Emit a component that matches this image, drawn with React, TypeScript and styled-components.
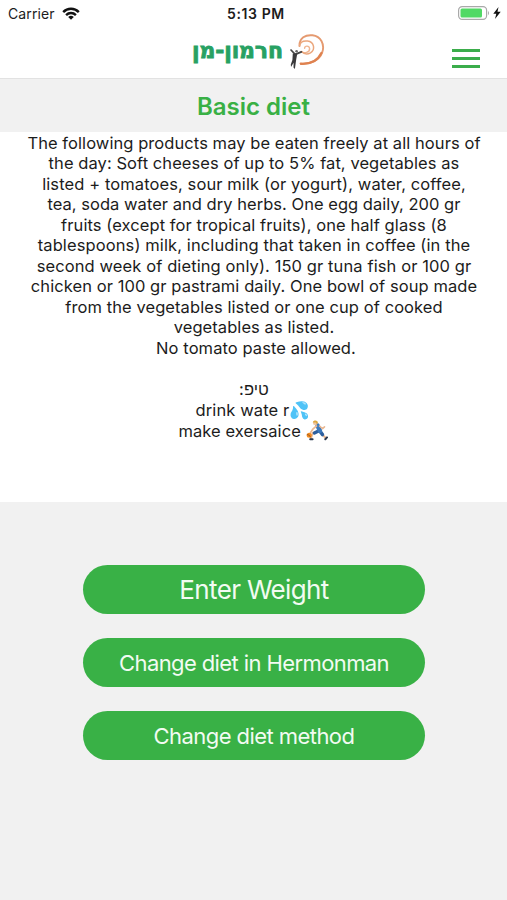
import React from "react";
import styled, { createGlobalStyle } from "styled-components";

const GlobalStyle = createGlobalStyle`
  * { box-sizing: border-box; }
  body { margin: 0; background: #f1f1f1; font-family: Inter, "Liberation Sans", sans-serif; }
`;

const Screen = styled.main`
  display: flex;
  flex-direction: column;
  width: 507px;
  height: 900px;
  overflow: hidden;
  background: #f1f1f1;
`;

const StatusBar = styled.div`
  display: grid;
  grid-template-columns: 1fr auto 1fr;
  align-items: center;
  height: 27px;
  padding: 0 6px 0 8px;
  background: #fff;
  color: #1c1c1c;
`;

const Carrier = styled.div`
  display: flex;
  align-items: center;
  gap: 7px;
  font-size: 14px;
  letter-spacing: 0.1px;
`;

const Clock = styled.div`
  padding-left: 3px;
  font-size: 14px;
  font-weight: 600;
  letter-spacing: 0.6px;
`;

const Power = styled.div`
  display: flex;
  justify-content: flex-end;
  align-items: center;
  gap: 3px;
  padding-bottom: 1px;
`;

const Header = styled.header`
  display: grid;
  grid-template-columns: 1fr auto 1fr;
  height: 52px;
  padding: 0 27px 0 37px;
  background: #fff;
  border-bottom: 1px solid #e2e2e2;
`;

const Logo = styled.div`
  grid-column: 2;
  display: flex;
  align-items: flex-start;
  gap: 6px;
  padding-top: 6px;
`;

const LogoName = styled.span`
  padding-top: 6px;
  color: #27a163;
  font: 700 22px/24px "DejaVu Sans", sans-serif;
  letter-spacing: -0.15px;
  -webkit-text-stroke: 0.8px #27a163;
`;

const MenuButton = styled.button`
  justify-self: end;
  display: flex;
  flex-direction: column;
  gap: 5px;
  width: 28px;
  height: 19px;
  margin-top: 22px;
  padding: 0;
  border: 0;
  background: none;
`;

const MenuLine = styled.span`
  width: 28px;
  height: 3px;
  background: #3bad4b;
`;

const TitleBar = styled.div`
  display: flex;
  align-items: center;
  justify-content: center;
  height: 53px;
  background: #f1f1f1;
`;

const Title = styled.h1`
  margin: 2px 0 0;
  color: #39b045;
  font-size: 24px;
  line-height: 30px;
  font-weight: 600;
`;

const Details = styled.section`
  height: 370px;
  padding: 1px 0 0 1px;
  background: #fff;
  color: #1c1c1c;
`;

const Line = styled.div<{ $track?: number; $indent?: number }>`
  display: flex;
  justify-content: center;
  align-items: center;
  height: 20.47px;
  padding-left: ${(p) => p.$indent ?? 0}px;
  font-size: 16.5px;
  line-height: 20.47px;
  white-space: pre;
  letter-spacing: ${(p) => p.$track ?? 0.07}px;
`;

const Tips = styled.div`
  padding: 1px 2px 0 0;
`;

const Actions = styled.nav`
  display: flex;
  flex-direction: column;
  align-items: center;
  gap: 24px;
  padding: 63px 0 0 1px;
`;

const Action = styled.button<{ $size: number; $track: number }>`
  width: 342px;
  height: 49px;
  padding: 0;
  border: 0;
  border-radius: 25px;
  background: #39b146;
  color: #f2fbf2;
  font-family: inherit;
  font-size: ${(p) => p.$size}px;
  letter-spacing: ${(p) => p.$track}px;
`;

const WifiIcon = () => (
  <svg width="18" height="13" viewBox="0 0 18 13" fill="none" stroke="#111" strokeWidth="2.4">
    <path d="M1.2 5.1C5.5.6 12.5.6 16.8 5.1" />
    <path d="M4.1 8.1C6.9 5.3 11.1 5.3 13.9 8.1" />
    <path d="M6.2 9.9Q9 7.7 11.8 9.9L9 12.8Z" fill="#111" stroke="none" />
  </svg>
);

const BatteryIcon = () => (
  <svg width="32" height="14" viewBox="0 0 32 14">
    <rect x=".6" y=".6" width="28" height="12.8" rx="3.6" fill="#fff" stroke="#a9a9a9" strokeWidth="1.2" />
    <rect x="2.5" y="2.5" width="21.5" height="9" rx="1.5" fill="#51d965" />
    <path d="M30 4.7Q32 7 30 9.3Z" fill="#a9a9a9" />
  </svg>
);

const BoltIcon = () => (
  <svg width="8" height="12" viewBox="0 0 8 12">
    <path d="M5.5 0 .3 6.7h3L2 12l5.7-7.2H4.5Z" fill="#111" />
  </svg>
);

const LogoMark = () => (
  <svg width="36" height="38" viewBox="0 0 36 38" fill="none" strokeLinecap="round">
    <path
      d="M12 18.5C15 21 21 19.5 20.6 15.5C20.2 12.3 15.8 12.5 15.6 15.2"
      stroke="#efb591" strokeWidth="1.4"
    />
    <path
      d="M10.5 13C10.2 5 16.5 1.5 23.5 2.3C32 3.2 36 11.5 33.2 19.5C30.8 26.5 22 32 11.5 30.5"
      stroke="#e59a70" strokeWidth="1.9"
    />
    <path
      d="M10.5 13C11 9.2 14.5 7.6 18.5 8C25.5 8.8 26.4 17 21.5 19.8C18 21.8 14.5 20.5 12.5 18.5"
      stroke="#eba77d" strokeWidth="1.5"
    />
    <path d="M32.4 20C29 27 22 31.3 12 30.8" stroke="#df8250" strokeWidth="2.3" />
    <path d="M2 17 6.2 21.4 12.4 18.9" stroke="#444" strokeWidth="1.7" />
    <circle cx="7.6" cy="18.2" r="1.3" fill="#666" />
    <path d="M3.8 20.5 8.2 21 7.2 26.5 5.9 36 4.5 34.5 4.6 29.8 2 34 1.8 31.6 3.4 27Z" fill="#3a3a3c" />
  </svg>
);

const PlayerIcon = () => (
  <svg width="22" height="21" viewBox="0 0 22 21" fill="none" strokeLinecap="round" strokeLinejoin="round">
    <path d="M12 11.5 6.7 13 4.8 18.6" stroke="#e9b893" strokeWidth="2" />
    <path d="M14.5 12 17.5 15.8 20 18.2" stroke="#e9b893" strokeWidth="2" />
    <path d="M13 10.8 8.4 13" stroke="#2d5f9e" strokeWidth="3.4" />
    <path d="M14 11.3 16.5 14.6" stroke="#2d5f9e" strokeWidth="3.4" />
    <path d="M11.5 5.5 14 11" stroke="#3b79bd" strokeWidth="4.4" />
    <path d="M10.5 6 6.8 9.2 4.6 12.4" stroke="#e9b893" strokeWidth="1.7" />
    <path d="M13.5 6 16.6 8.6 18.5 6.8" stroke="#e9b893" strokeWidth="1.6" />
    <circle cx="9.2" cy="2.9" r="2.2" fill="#efc5a0" />
    <path d="M6.8 2.4C7.2-.2 11.8-.2 11.9 2.7L10.9 4.4 10 2.4Z" fill="#dda83f" />
    <path d="M4.2 19.3H6.6M19.3 19.2 21 17.4" stroke="#29384f" strokeWidth="2" />
    <circle cx="3.2" cy="15.3" r="2.5" fill="#f28b20" />
    <path d="M1.2 14.4Q3.5 14.3 4.5 17" stroke="#73431c" strokeWidth=".6" />
  </svg>
);

const paragraph: { text: string; track?: number; indent?: number }[] = [
  { text: "The following products may be eaten freely at all hours of" },
  { text: "the day: Soft cheeses of up to 5% fat, vegetables as" },
  { text: "listed + tomatoes, sour milk (or yogurt), water, coffee,", track: 0.1 },
  { text: "tea, soda water and dry herbs. One egg daily, 200 gr", track: 0.03 },
  { text: "fruits (except for tropical fruits), one half glass (8", track: 0.08 },
  { text: "tablespoons) milk, including that taken in coffee (in the", track: 0.11 },
  { text: "second week of dieting only). 150 gr tuna fish or 100 gr", track: 0.1 },
  { text: "chicken or 100 gr pastrami daily. One bowl of soup made" },
  { text: "from the vegetables listed or one cup of cooked", track: 0.08 },
  { text: "vegetables as listed." },
  { text: "No tomato paste allowed.", track: 0.08, indent: 4 },
  { text: "" },
];

export default function App() {
  return (
    <Screen>
      <GlobalStyle />
      <StatusBar>
        <Carrier>Carrier<WifiIcon /></Carrier>
        <Clock>5:13 PM</Clock>
        <Power><BatteryIcon /><BoltIcon /></Power>
      </StatusBar>
      <Header>
        <Logo>
          <LogoName dir="rtl">חרמון-מן</LogoName>
          <LogoMark />
        </Logo>
        <MenuButton aria-label="Menu"><MenuLine /><MenuLine /><MenuLine /></MenuButton>
      </Header>
      <TitleBar><Title>Basic diet</Title></TitleBar>
      <Details>
        {paragraph.map((line, i) => (
          <Line key={i} $track={line.track} $indent={line.indent}>{line.text}</Line>
        ))}
        <Line dir="rtl">טיפ:</Line>
        <Tips>
          <Line $track={0.12}>drink wate r💦</Line>
          <Line>{"make exersaice "}<PlayerIcon /></Line>
        </Tips>
      </Details>
      <Actions>
        <Action $size={26} $track={-0.65}>Enter Weight</Action>
        <Action $size={22} $track={-0.6}>Change diet in Hermonman</Action>
        <Action $size={22} $track={-0.56}>Change diet method</Action>
      </Actions>
    </Screen>
  );
}
